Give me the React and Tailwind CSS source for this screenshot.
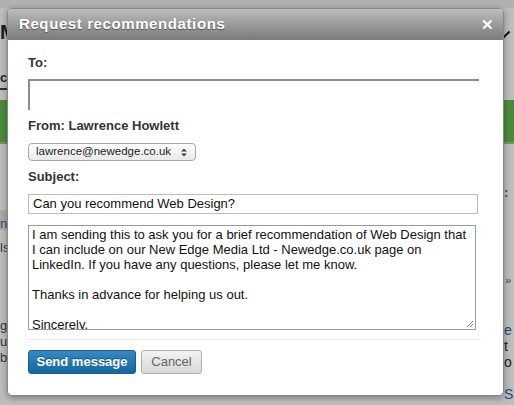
const Field = ({ children }) => <div className="text-[13px] leading-[16px] font-bold text-[#333]">{children}</div>

const App = () => {
    return (
        <div className="relative w-[514px] h-[405px] overflow-hidden bg-[#b1b1b1] font-['Liberation_Sans',Arial,sans-serif]">
            {/* page behind the overlay */}
            <div className="absolute left-0 top-[8px] w-[514px] h-[397px] bg-[#bdbdbd]" />
            <div className="absolute left-0 top-[22px] text-[20px] font-bold text-[#1a1a1a] leading-none">M</div>
            <div className="absolute left-0 top-[68px] text-[13px] font-bold text-[#222]">ce</div>
            <div className="absolute left-0 top-[88px] w-[7px] h-[2px] bg-[#333]" />
            <div className="absolute left-0 top-[100px] w-[514px] h-[42px] bg-[#4b8a3c]" />
            <div className="absolute left-0 top-[142px] w-[514px] h-[2px] bg-[#6f9a62]" />
            <div className="absolute left-0 top-[210px] w-[7px] h-[20px] bg-[#a9a9a9]" />
            <div className="absolute left-0 top-[214px] text-[13px] text-[#1b4f7a]">nd</div>
            <div className="absolute left-0 top-[238px] text-[13px] text-[#333]">ls</div>
            <div className="absolute left-0 top-[318px] text-[13px] leading-[16px] text-[#333]">gr<br />u<br />be</div>
            <div className="absolute left-[505px] top-[30px] w-[2px] h-[10px] rotate-45 bg-[#111]" />
            <div className="absolute left-[504px] top-[183px] text-[13px] font-bold text-[#1b4f7a]">:</div>
            <div className="absolute left-[505px] top-[272px] text-[11px] text-[#1b4f7a]">»</div>
            <div className="absolute left-[504px] top-[322px] text-[14px] leading-[16px] text-[#1b4f7a]">e<br /><span className="text-[#222]">t</span><br /><span className="text-[#222]">o</span><br /><br />S</div>

            {/* modal */}
            <div className="absolute left-[7px] top-[8px] w-[497px] h-[388px] rounded-[5px] bg-white border border-[#888] shadow-[0_2px_6px_rgba(0,0,0,0.35)] overflow-hidden flex flex-col">
                <div className="h-[31px] shrink-0 flex items-center justify-between pl-[11px] pr-[9px] bg-gradient-to-b from-[#bdbdbd] to-[#7a7a7a]">
                    <span className="text-[15px] font-bold text-white tracking-[0.6px] [text-shadow:0_1px_1px_rgba(0,0,0,0.45)]">Request recommendations</span>
                    <span className="text-[15px] font-bold text-white leading-none">✕</span>
                </div>
                <div className="flex flex-col px-[20px] pt-[15px]">
                    <Field>To:</Field>
                    <div className="mt-[8px] w-[451px] h-[31px] border-t-2 border-l-2 border-[#8c8c8c]" />
                    <div className="mt-[8px]"><Field>From: Lawrence Howlett</Field></div>
                    <div className="mt-[9px] w-[168px] h-[18px] rounded-[4px] border border-[#a5a5a5] bg-gradient-to-b from-white to-[#e9e9e9] flex items-center justify-between pl-[7px] pr-[8px]">
                        <span className="text-[11.5px] text-[#222] leading-none">lawrence@newedge.co.uk</span>
                        <svg width="6" height="9" viewBox="0 0 6 9"><path d="M0 3.5L3 0.5L6 3.5Z M0 5.5L3 8.5L6 5.5Z" fill="#444" /></svg>
                    </div>
                    <div className="mt-[8px]"><Field>Subject:</Field></div>
                    <div className="mt-[9px] w-[450px] h-[20px] border border-[#bcbcbc] flex items-center pl-[4px]">
                        <span className="text-[13px] text-[#111]">Can you recommend Web Design?</span>
                    </div>
                    <div className="relative mt-[11px] w-[448px] h-[105px] border border-[#9a9a9a] overflow-hidden pl-[3px] pt-[1px] text-[13px] leading-[15px] text-[#111] whitespace-nowrap">
                        <p>I am sending this to ask you for a brief recommendation of Web Design that<br />I can include on our New Edge Media Ltd - Newedge.co.uk page on<br />LinkedIn. If you have any questions, please let me know.</p>
                        <p className="mt-[15px]">Thanks in advance for helping us out.</p>
                        <p className="mt-[15px]">Sincerely,</p>
                        <svg className="absolute right-[1px] bottom-[1px]" width="8" height="8" viewBox="0 0 8 8"><path d="M7 1L1 7M7 4L4 7" stroke="#777" strokeWidth="1" /></svg>
                    </div>
                    <div className="mt-[9px] -mx-[2px] w-[455px] h-px bg-[#ececec]" />
                    <div className="mt-[10px] flex gap-[5px]">
                        <div className="w-[108px] h-[24px] rounded-[3px] border border-[#175f92] bg-gradient-to-b from-[#3489c4] to-[#14679f] flex items-center justify-center text-[13px] font-bold text-white [text-shadow:0_-1px_0_rgba(0,0,0,0.35)]">Send message</div>
                        <div className="w-[61px] h-[24px] rounded-[3px] border border-[#b0b0b0] bg-gradient-to-b from-[#f3f3f3] to-[#d8d8d8] flex items-center justify-center text-[13px] text-[#666]">Cancel</div>
                    </div>
                </div>
            </div>
        </div>
    )
}
export default App
